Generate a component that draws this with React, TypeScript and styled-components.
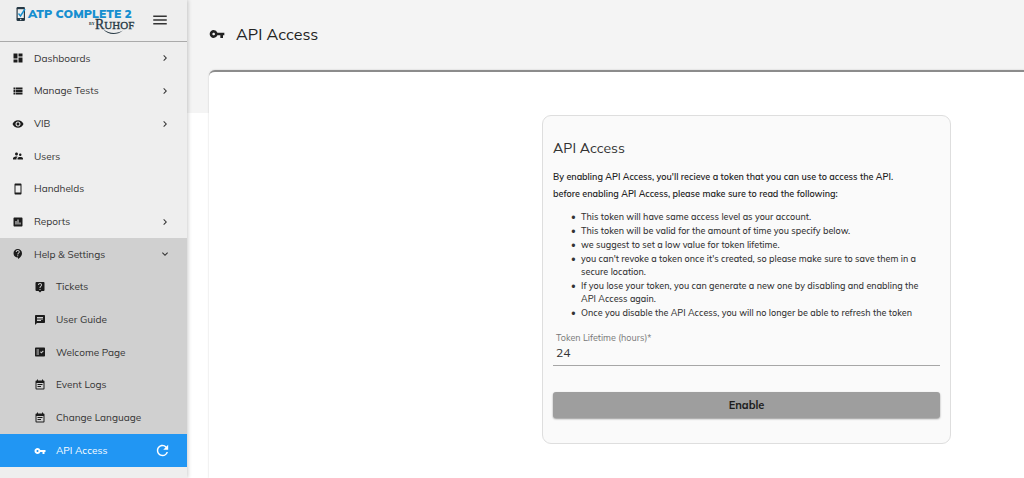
import React, { useState } from "react";
import styled, { createGlobalStyle } from "styled-components";
import type { IconType } from "react-icons";
import {
  MdAssessment,
  MdChat,
  MdChevronRight,
  MdContactSupport,
  MdDashboard,
  MdEventNote,
  MdExpandMore,
  MdFactCheck,
  MdLiveHelp,
  MdMenu,
  MdRefresh,
  MdRemoveRedEye,
  MdStayCurrentPortrait,
  MdSupervisorAccount,
  MdViewList,
  MdVpnKey,
} from "react-icons/md";

const GlobalStyle = createGlobalStyle`
  *, *::before, *::after { box-sizing: border-box; }
  body {
    margin: 0;
    background: #fff;
    color: #333;
    font-family: Mulish, Muli, Lato, sans-serif;
    font-size: 10px;
    overflow-x: hidden;
  }
  button, input { font: inherit; color: inherit; }
`;

const Shell = styled.div`
  display: flex;
  min-height: 100vh;
`;

const Sidebar = styled.aside`
  position: relative;
  flex: 0 0 187px;
  background: #eee;
  box-shadow: 1px 0 4px rgba(0, 0, 0, 0.2);
`;

const Brand = styled.div`
  display: flex;
  align-items: center;
  justify-content: space-between;
  height: 42px;
  padding: 0 18px 2px 16px;
  border-bottom: 1px solid #aaa;
`;

const IconButton = styled.button`
  display: flex;
  padding: 0;
  border: 0;
  background: none;
  cursor: pointer;
`;

const NavGroup = styled.ul<{ $open?: boolean }>`
  display: grid;
  grid-auto-rows: 1fr;
  min-height: 196px;
  margin: 0;
  padding: 0;
  list-style: none;
  background: ${(p) => (p.$open ? "#d0d0d0" : "transparent")};
`;

const NavItem = styled.li`
  display: flex;
`;

const NavLink = styled.a<{ $nested?: boolean; $active?: boolean }>`
  flex: 1;
  display: flex;
  align-items: center;
  min-height: 32px;
  padding: 0 16px 0 ${(p) => (p.$nested ? 34 : 12)}px;
  color: ${(p) => (p.$active ? "#fff" : "#333")};
  background: ${(p) => (p.$active ? "#2196f3" : "transparent")};
  text-decoration: none;
`;

const NavIcon = styled.span<{ $active?: boolean }>`
  display: flex;
  width: 22px;
  color: ${(p) => (p.$active ? "#fff" : "#1c1c1c")};
`;

const NavLabel = styled.span`
  flex: 1;
`;

const ActiveRow = styled.div`
  display: flex;
  height: 33px;
`;

const Main = styled.main`
  flex: 1;
  min-width: 0;
  display: flex;
  flex-direction: column;
  padding-left: 22px;
  background: linear-gradient(#f4f4f4 113px, #fff 113px);
`;

const PageHeader = styled.header`
  display: flex;
  align-items: center;
  gap: 11px;
  height: 70px;
  padding-bottom: 2px;
  color: #222;
`;

const PageTitle = styled.h1`
  margin: 0;
  font-size: 16px;
  font-weight: 400;
`;

const Panel = styled.section`
  flex: 1;
  display: flex;
  align-items: flex-start;
  justify-content: flex-end;
  padding: 43px 73px 32px 16px;
  background: #fff;
  border-top: 2px solid #8c8c8c;
  border-top-left-radius: 6px;
  box-shadow: 0 0 2px rgba(0, 0, 0, 0.2);
`;

const Card = styled.form`
  width: 100%;
  max-width: 409px;
  padding: 24px 10px 25px;
  background: #fafafa;
  border: 1px solid #dedede;
  border-radius: 9px;
`;

const CardTitle = styled.h2`
  margin: 0 0 12px;
  font-size: 14px;
  font-weight: 400;
  line-height: 16px;
`;

const Intro = styled.p`
  margin: 0 0 8px;
  font-size: 9px;
  font-weight: 600;
  line-height: 17px;
  color: #222;
`;

const Notes = styled.ul`
  display: flex;
  flex-direction: column;
  gap: 1px;
  margin: 0 0 13px;
  padding: 0 8px 0 18px;
  list-style: none;
  font-size: 9px;
  font-weight: 500;
  line-height: 13px;
`;

const Note = styled.li`
  display: grid;
  grid-template-columns: 10px 1fr;

  &::before {
    content: "•";
  }
`;

const Field = styled.div`
  display: flex;
  flex-direction: column;
  margin-bottom: 26px;
  border-bottom: 1px solid #a6a6a6;
`;

const FieldLabel = styled.label`
  padding: 0 3px;
  font-size: 9px;
  line-height: 12px;
  color: #777;
`;

const FieldInput = styled.input`
  height: 21px;
  padding: 0 3px 4px;
  border: 0;
  outline: 0;
  background: transparent;
  font-size: 12px;
`;

const EnableButton = styled.button`
  display: block;
  width: 100%;
  height: 26px;
  border: 0;
  border-radius: 3px;
  background: #9e9e9e;
  box-shadow: 0 1px 2px rgba(0, 0, 0, 0.4);
  color: #1c1c1c;
  font-size: 11px;
  font-weight: 700;
  cursor: pointer;
`;

function Logo() {
  return (
    <svg width="120" height="32" viewBox="0 0 120 32" role="img" aria-label="ATP Complete 2 by Ruhof">
      <rect x="0.500" y="3" width="8.500" height="14" rx="1.200" fill="#263844" />
      <rect x="1.700" y="5.200" width="6.100" height="8.800" fill="#eee" />
      <circle cx="4.750" cy="15.500" r="0.700" fill="#eee" />
      <path d="M2.500 9.500l2 2.500 4.500-7" fill="none" stroke="#168fd0" strokeWidth="1.400" />
      <text x="12" y="14" fill="#168fd0" fontFamily="Mulish, Muli, Lato, sans-serif" fontWeight="900" fontSize="12">
        ATP COMPLETE 2
      </text>
      <text x="73" y="21" fill="#263844" fontFamily="Liberation Serif, serif" fontWeight="700" fontSize="4">
        BY
      </text>
      <text x="79" y="25" fill="#263844" stroke="#263844" strokeWidth="0.300" fontFamily="Liberation Serif, serif" fontSize="14">
        R<tspan fontSize="11">UHOF</tspan>
      </text>
      <path d="M87 25c6 5 14 5 20 1.500c-6 5-15 5-20-1.500" fill="#263844" />
    </svg>
  );
}

type Entry = { label: string; icon: IconType; expandable?: boolean };

const topEntries: Entry[] = [
  { label: "Dashboards", icon: MdDashboard, expandable: true },
  { label: "Manage Tests", icon: MdViewList, expandable: true },
  { label: "VIB", icon: MdRemoveRedEye, expandable: true },
  { label: "Users", icon: MdSupervisorAccount },
  { label: "Handhelds", icon: MdStayCurrentPortrait },
  { label: "Reports", icon: MdAssessment, expandable: true },
];

const helpEntries: Entry[] = [
  { label: "Tickets", icon: MdLiveHelp },
  { label: "User Guide", icon: MdChat },
  { label: "Welcome Page", icon: MdFactCheck },
  { label: "Event Logs", icon: MdEventNote },
  { label: "Change Language", icon: MdEventNote },
];

const notes = [
  "This token will have same access level as your account.",
  "This token will be valid for the amount of time you specify below.",
  "we suggest to set a low value for token lifetime.",
  "you can't revoke a token once it's created, so please make sure to save them in a secure location.",
  "If you lose your token, you can generate a new one by disabling and enabling the API Access again.",
  "Once you disable the API Access, you will no longer be able to refresh the token",
];

function NavRow({ entry, nested }: { entry: Entry; nested?: boolean }) {
  const Icon = entry.icon;
  return (
    <NavItem>
      <NavLink href="#" $nested={nested}>
        <NavIcon>
          <Icon size={12} />
        </NavIcon>
        <NavLabel>{entry.label}</NavLabel>
        {entry.expandable && <MdChevronRight size={12} />}
      </NavLink>
    </NavItem>
  );
}

export default function App() {
  const [lifetime, setLifetime] = useState("24");
  return (
    <>
      <GlobalStyle />
      <Shell>
        <Sidebar>
          <Brand>
            <Logo />
            <IconButton type="button" aria-label="Toggle menu">
              <MdMenu size={18} />
            </IconButton>
          </Brand>
          <nav>
            <NavGroup>
              {topEntries.map((entry) => (
                <NavRow key={entry.label} entry={entry} />
              ))}
            </NavGroup>
            <NavGroup $open>
              <NavItem>
                <NavLink href="#">
                  <NavIcon>
                    <MdContactSupport size={12} />
                  </NavIcon>
                  <NavLabel>Help &amp; Settings</NavLabel>
                  <MdExpandMore size={12} />
                </NavLink>
              </NavItem>
              {helpEntries.map((entry) => (
                <NavRow key={entry.label} entry={entry} nested />
              ))}
            </NavGroup>
            <ActiveRow>
              <NavLink href="#" $nested $active aria-current="page">
                <NavIcon $active>
                  <MdVpnKey size={12} />
                </NavIcon>
                <NavLabel>API Access</NavLabel>
                <MdRefresh size={17} />
              </NavLink>
            </ActiveRow>
          </nav>
        </Sidebar>
        <Main>
          <PageHeader>
            <MdVpnKey size={16} />
            <PageTitle>API Access</PageTitle>
          </PageHeader>
          <Panel>
            <Card onSubmit={(e) => e.preventDefault()}>
              <CardTitle>API Access</CardTitle>
              <Intro>
                By enabling API Access, you'll recieve a token that you can use to access the API.
                <br />
                before enabling API Access, please make sure to read the following:
              </Intro>
              <Notes>
                {notes.map((note) => (
                  <Note key={note}>{note}</Note>
                ))}
              </Notes>
              <Field>
                <FieldLabel htmlFor="lifetime">Token Lifetime (hours)*</FieldLabel>
                <FieldInput
                  id="lifetime"
                  inputMode="numeric"
                  required
                  value={lifetime}
                  onChange={(e) => setLifetime(e.target.value)}
                />
              </Field>
              <EnableButton type="submit">Enable</EnableButton>
            </Card>
          </Panel>
        </Main>
      </Shell>
    </>
  );
}
